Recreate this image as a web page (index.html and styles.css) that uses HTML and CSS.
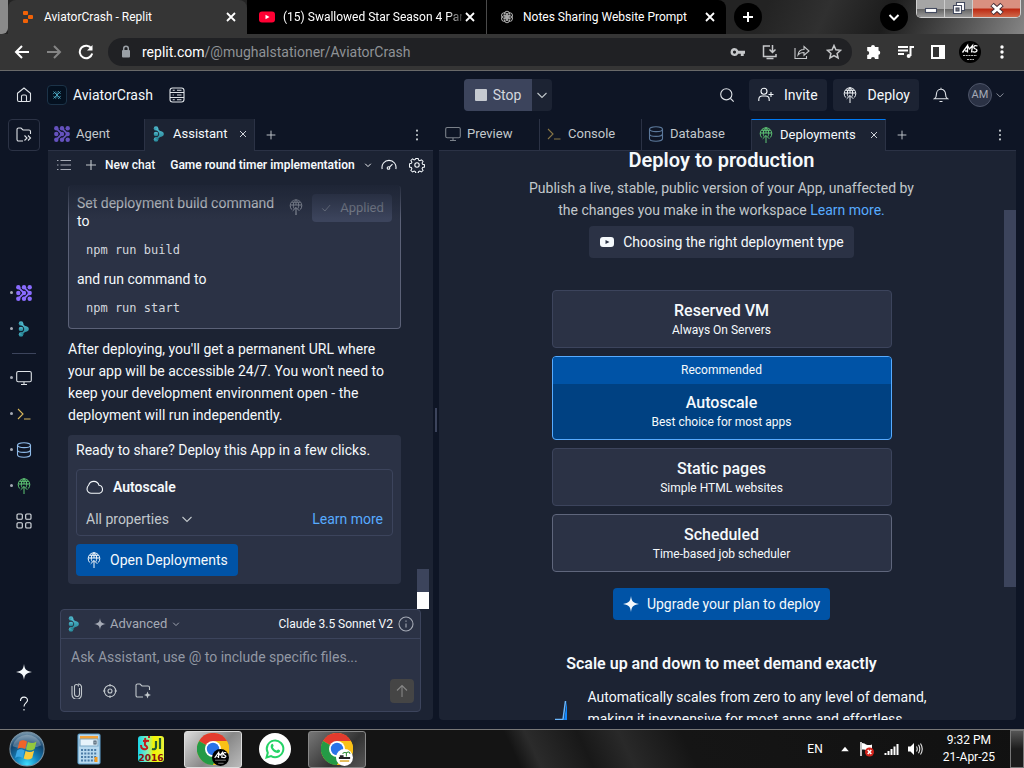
FILE: index.html
```html
<!DOCTYPE html>
<html lang="en">
<head>
<meta charset="utf-8">
<title>AviatorCrash - Replit</title>
<link rel="stylesheet" href="styles.css">
</head>
<body>
<svg class="sprite" aria-hidden="true">
  <defs>
    <linearGradient id="teal" x1="0" y1="0" x2="0" y2="1"><stop offset="0" stop-color="#56c0d6"/><stop offset="1" stop-color="#217f8f"/></linearGradient>
    <radialGradient id="orb" cx=".5" cy=".95" r=".95"><stop offset="0" stop-color="#3fe0ff"/><stop offset=".35" stop-color="#1583bd"/><stop offset=".7" stop-color="#12446e"/><stop offset="1" stop-color="#7e9cb0"/></radialGradient>
    <linearGradient id="rainbow" x1="0" y1="0" x2="1" y2="0"><stop offset="0" stop-color="#19d3e8"/><stop offset=".35" stop-color="#7df0c0"/><stop offset=".6" stop-color="#f4f400"/><stop offset="1" stop-color="#e8f63a"/></linearGradient>
  </defs>
  <symbol id="close" viewBox="0 0 16 16"><path d="M4 4l8 8M12 4l-8 8"/></symbol>
  <symbol id="plus" viewBox="0 0 16 16"><path d="M8 3v10M3 8h10"/></symbol>
  <symbol id="down" viewBox="0 0 16 16"><path d="M3.500 6L8 10.500 12.500 6"/></symbol>
  <symbol id="dots" viewBox="0 0 16 16"><g fill="currentColor" stroke="none"><circle cx="8" cy="3" r="1.200"/><circle cx="8" cy="8" r="1.200"/><circle cx="8" cy="13" r="1.200"/></g></symbol>
  <symbol id="monitor" viewBox="0 0 16 16"><rect x=".7" y="1.500" width="14.600" height="10.300" rx="1.500"/><path d="M8 12v2.500M5 14.500h6"/></symbol>
  <symbol id="console" viewBox="0 0 16 16"><path d="M2 3l5 5-5 5M8 13h6.500"/></symbol>
  <symbol id="database" viewBox="0 0 16 16"><ellipse cx="8" cy="3.200" rx="6.500" ry="2.400"/><path d="M1.500 3v9.800c0 1.300 2.900 2.500 6.500 2.500s6.500-1.200 6.500-2.500V3M1.500 8c0 1.300 2.900 2.400 6.500 2.400S14.500 9.300 14.500 8"/></symbol>
  <symbol id="deploy" viewBox="0 0 16 16"><path d="M3.700 10.500A5.800 5.800 0 1 1 12.300 10.500M8 .6C5 3 4.800 7 6 9.500M8 .6c3 2.400 3.200 6.400 2 8.900M2.300 6h11.400M3.500 3.300h9M8 .6v5.400M8 8.500V16M4.700 11.800L8 8.500l3.300 3.300" stroke-width="1"/></symbol>
  <symbol id="agent" viewBox="0 0 16 16"><g fill="currentColor" stroke="none"><circle cx="2.300" cy="2.300" r="2.200"/><circle cx="8" cy="2.300" r="2.200"/><circle cx="13.700" cy="2.300" r="2.200"/><circle cx="2.300" cy="8" r="2.200"/><circle cx="8" cy="8" r="2.200"/><circle cx="13.700" cy="8" r="2.200"/><circle cx="2.300" cy="13.700" r="2.200"/><circle cx="8" cy="13.700" r="2.200"/><circle cx="13.700" cy="13.700" r="2.200"/></g><path stroke-width="1.800" d="M2.300 2.300L8 8l-5.700 5.700M8 2.300L13.700 8 8 13.700"/></symbol>
  <symbol id="assistant" viewBox="0 0 16 16"><g fill="url(#teal)" stroke="none"><circle cx="5" cy="2.500" r="2.300"/><circle cx="5" cy="8" r="2.300"/><circle cx="5" cy="13.500" r="2.300"/><path d="M7 1.500c0 2.500 1.500 3.300 4 4a2.600 2.600 0 0 1 0 5c-2.500.7-4 1.500-4 4l-3-2.200c2-.6 3.800-1.800 4.300-4.300C7.800 5.500 6 4.300 4 3.700z"/></g></symbol>
  <symbol id="spark" viewBox="0 0 16 16"><path fill="currentColor" stroke="none" d="M8 0c.7 5.400 1.600 6.800 8 8-6.400 1.200-7.300 2.600-8 8-.7-5.400-1.600-6.800-8-8 6.400-1.200 7.300-2.600 8-8z"/></symbol>
  <symbol id="chrome" viewBox="0 0 32 32"><g stroke="none"><circle cx="16" cy="16" r="16" fill="#fbc116"/><path d="M16 16L2.100 8A16 16 0 0 1 29.900 8z" fill="#e33b2e"/><path d="M2.100 8A16 16 0 0 0 16 32l7-12-7-4z" fill="#249a46"/><path d="M16 8h13.900A16 16 0 0 1 16 32l7-12z" fill="#fbc116"/><circle cx="16" cy="16" r="8" fill="#fff"/><circle cx="16" cy="16" r="6.200" fill="#2a73e8"/></g></symbol>
</svg>

<header class="titlebar">
  <div class="edge"></div>
  <nav class="browser-tabs" aria-label="Browser tabs">
    <div class="browser-tab current">
      <svg class="favicon" viewBox="0 0 16 16"><g fill="#f26207" stroke="none"><rect x="3" y="2" width="5" height="4" rx="1"/><rect x="8" y="6" width="5" height="4" rx="1"/><rect x="3" y="10" width="5" height="4" rx="1"/></g></svg>
      <span class="tab-title">AviatorCrash - Replit</span>
      <button class="tab-close" aria-label="Close tab"><svg class="bold"><use href="#close"/></svg></button>
    </div>
    <div class="browser-tab">
      <svg class="favicon" viewBox="0 0 16 16"><rect x="0" y="2.500" width="16" height="11" rx="3" fill="#f03" stroke="none"/><path d="M6.500 5.700v4.600l4-2.300z" fill="#fff" stroke="none"/></svg>
      <span class="tab-title faded">(15) Swallowed Star Season 4 Par</span>
      <button class="tab-close" aria-label="Close tab"><svg class="bold"><use href="#close"/></svg></button>
    </div>
    <div class="browser-tab">
      <svg class="favicon grey" viewBox="0 0 16 16"><g><ellipse cx="8" cy="5.500" rx="2.800" ry="3.300"/><ellipse cx="8" cy="5.500" rx="2.800" ry="3.300" transform="rotate(60 8 8)"/><ellipse cx="8" cy="5.500" rx="2.800" ry="3.300" transform="rotate(120 8 8)"/><ellipse cx="8" cy="5.500" rx="2.800" ry="3.300" transform="rotate(180 8 8)"/><ellipse cx="8" cy="5.500" rx="2.800" ry="3.300" transform="rotate(240 8 8)"/><ellipse cx="8" cy="5.500" rx="2.800" ry="3.300" transform="rotate(300 8 8)"/></g></svg>
      <span class="tab-title">Notes Sharing Website Prompt</span>
      <button class="tab-close" aria-label="Close tab"><svg class="bold"><use href="#close"/></svg></button>
    </div>
  </nav>
  <button class="round" aria-label="New tab"><svg class="bold"><use href="#plus"/></svg></button>
  <button class="round search-tabs" aria-label="Search tabs"><svg class="bold"><use href="#down"/></svg></button>
  <div class="window-buttons">
    <button aria-label="Minimize"><svg viewBox="0 0 16 16"><rect x="2.500" y="7.500" width="11" height="4" fill="#fff" stroke="#444b60"/></svg></button>
    <button aria-label="Restore"><svg viewBox="0 0 16 16"><path d="M5.500 1.500h8v8h-8z" fill="#fff" stroke="#444b60"/><path d="M2.500 4.500h8v8h-8z" fill="#fff" stroke="#444b60"/><rect x="5" y="7" width="3" height="3" fill="#777" stroke="#444b60"/></svg></button>
    <button class="quit" aria-label="Close"><svg viewBox="0 0 16 16"><path d="M3 3.500l10 9M13 3.500l-10 9" stroke="#4a3038" stroke-width="5"/><path d="M3.500 4l9 8M12.500 4l-9 8" stroke="#fff" stroke-width="3"/></svg></button>
  </div>
</header>

<div class="toolbar">
  <button class="tool" aria-label="Back"><svg class="bold" viewBox="0 0 16 16"><path d="M15 8H2M8 2L2 8l6 6"/></svg></button>
  <button class="tool dim" aria-label="Forward"><svg class="bold" viewBox="0 0 16 16"><path d="M1 8h13M8 2l6 6-6 6"/></svg></button>
  <button class="tool" aria-label="Reload"><svg class="bold" viewBox="0 0 16 16"><path d="M13.500 4.700A6.300 6.300 0 1 0 14.200 9.500"/><path d="M14.500 1v5.500H9z" fill="currentColor" stroke="none"/></svg></button>
  <div class="omnibox">
    <svg class="lock" viewBox="0 0 16 16"><rect x="4" y="6" width="8" height="7.500" rx="1" fill="currentColor" stroke="none"/><path d="M5.700 6V4.500a2.300 2.300 0 0 1 4.600 0V6"/></svg>
    <div class="url" role="textbox" aria-label="Address"><b>replit.com</b>/@mughalstationer/AviatorCrash</div>
    <button class="tool" aria-label="Passwords"><svg viewBox="0 0 16 16"><path fill="currentColor" fill-rule="evenodd" stroke="none" d="M4.500 4a4 4 0 0 1 3.800 2.700H15v3h-1.300V12h-2.900V9.700H8.200A4 4 0 1 1 4.500 4zm0 2.500a1.600 1.600 0 1 0 0 3.200 1.600 1.600 0 0 0 0-3.200z"/></svg></button>
    <button class="tool" aria-label="Install"><svg viewBox="0 0 16 16"><path stroke-width="1.500" d="M8 2H1.500v10.500h12.500V10M10.500 1v7M7.500 5.500l3 3 3-3M4.500 14.500h7"/></svg></button>
    <button class="tool" aria-label="Share"><svg viewBox="0 0 16 16"><path d="M1 4v10.500h11.500V12M4 11c.5-4 3-5.500 6-5.500V2.500L15 7l-5 4.200V8.500C7.500 8.500 5.500 9 4 11z"/></svg></button>
    <button class="tool" aria-label="Bookmark"><svg viewBox="0 0 16 16"><path stroke-width="1.500" d="M8 1.500l1.900 4.300 4.700.5-3.500 3.100 1 4.600L8 11.600 3.900 14l1-4.600L1.400 6.300l4.700-.5z"/></svg></button>
  </div>
  <button class="tool" aria-label="Extensions"><svg viewBox="0 0 16 16"><path fill="currentColor" stroke="none" d="M5 3a2 2 0 0 1 4 0h3.500v3.500a2.200 2.200 0 0 1 0 4.300V15H9a2 2 0 0 0-4 0H1.200v-4a2 2 0 0 0 0-4V3z"/></svg></button>
  <button class="tool" aria-label="Media"><svg class="bold" viewBox="0 0 16 16"><path d="M0 3h10M0 6.500h10M0 10h6M12.500 12V3H16"/><circle cx="10.700" cy="12" r="2" fill="currentColor" stroke="none"/></svg></button>
  <button class="tool" aria-label="Side panel"><svg viewBox="0 0 16 16"><path fill="currentColor" fill-rule="evenodd" stroke="none" d="M1 1h14v14H1zM3 3v10h6V3z"/></svg></button>
  <button class="tool" aria-label="Profile"><span class="profile"><svg viewBox="0 0 22 22"><path d="M3.500 11.500l5-7v7M6 10h3M8.500 4.500l2 3.500 3-3.500-1 7M18.500 5c-4-1.500-5 2-2 3s1 4-3 2.700" stroke="#fff" stroke-width="1.300"/><path d="M4 14.500h14M8 18.500h7" stroke="#bbb" stroke-dasharray="2 .7"/></svg></span></button>
  <button class="tool" aria-label="Menu"><svg viewBox="0 0 16 16"><g fill="#fff" stroke="none"><circle cx="8" cy="3" r="1.700"/><circle cx="8" cy="8" r="1.700"/><circle cx="8" cy="13" r="1.700"/></g></svg></button>
</div>

<div class="app">
  <header class="app-header">
    <div class="group">
      <button class="icon-button" aria-label="Home"><svg viewBox="0 0 16 16"><path d="M1.500 6.300L8 1l6.500 5.300v6.700a1.500 1.500 0 0 1-1.500 1.500H3A1.500 1.500 0 0 1 1.500 13zM5.500 14.500V9.500A1.500 1.500 0 0 1 7 8h2a1.500 1.500 0 0 1 1.500 1.500v5"/></svg></button>
      <span class="app-logo"><svg viewBox="0 0 16 16"><path d="M4 4l8 8M12 4l-8 8M3.500 7l3-3M9 3.500l3 3M4 9.500L7 12M9.500 12.500L12 9M8 5v6"/></svg></span>
      <span class="app-name">AviatorCrash</span>
      <button class="icon-button server" aria-label="Server"><svg viewBox="0 0 16 16"><rect x="1" y="1" width="14" height="14" rx="2.500"/><path d="M1 5.500h14M1 10.500h14M3.700 3.300h2M8 3.300h4.500M3.700 8h1M8 8h4.500M3.700 12.800h2M8 12.800h4.500"/></svg></button>
    </div>
    <div class="run">
      <button class="stop"><span class="square"></span>Stop</button>
      <button class="run-more" aria-label="Run options"><svg><use href="#down"/></svg></button>
    </div>
    <div class="group end">
      <button class="icon-button" aria-label="Search"><svg viewBox="0 0 16 16"><circle cx="7.300" cy="7.300" r="5.600"/><path d="M11.500 11.500l3.200 3.200"/></svg></button>
      <button class="solid"><svg viewBox="0 0 16 16"><circle cx="6" cy="4.300" r="3"/><path d="M.8 14v-1.500a3.500 3.500 0 0 1 3.500-3.500h3.400a3.500 3.500 0 0 1 3.500 3.500V14M13 5v5M10.500 7.500h5"/></svg>Invite</button>
      <button class="solid"><svg><use href="#deploy"/></svg>Deploy</button>
      <button class="icon-button" aria-label="Notifications"><svg viewBox="0 0 16 16"><path d="M1.500 11.700c1.500-1 2-2.200 2-5a4.500 4.500 0 0 1 9 0c0 2.800.5 4 2 5zM6.500 14.500h3M8 2V.8"/></svg></button>
      <button class="account" aria-label="Account AM"><span>AM</span><svg><use href="#down"/></svg></button>
    </div>
  </header>

  <div class="workspace">
    <aside class="rail">
      <button class="files" aria-label="Files"><svg viewBox="0 0 16 16"><path d="M7 14H2.500A1.500 1.500 0 0 1 1 12.500v-10A1.500 1.500 0 0 1 2.500 1H5l2 2h6a1.500 1.500 0 0 1 1.500 1.500V7M8.500 8.500L11 11l-2.500 2.500M12 8.500l2.500 2.500-2.500 2.500"/></svg></button>
      <div class="rail-icons">
        <button class="open violet" aria-label="Agent"><svg><use href="#agent"/></svg></button>
        <button class="open" aria-label="Assistant"><svg><use href="#assistant"/></svg></button>
        <hr>
        <button class="open" aria-label="Preview"><svg><use href="#monitor"/></svg></button>
        <button class="open yellow" aria-label="Console"><svg><use href="#console"/></svg></button>
        <button class="open sky" aria-label="Database"><svg><use href="#database"/></svg></button>
        <button class="open green" aria-label="Deployments"><svg><use href="#deploy"/></svg></button>
        <button class="all" aria-label="All tools"><svg viewBox="0 0 16 16"><rect x="1" y="1" width="5.300" height="5.300" rx="1"/><rect x="9.700" y="1" width="5.300" height="5.300" rx="1"/><rect x="1" y="9.700" width="5.300" height="5.300" rx="1"/><rect x="9.700" y="9.700" width="5.300" height="5.300" rx="1"/></svg></button>
      </div>
      <div class="rail-foot">
        <button aria-label="What's new"><svg><use href="#spark"/></svg></button>
        <button aria-label="Help"><svg viewBox="0 0 16 16"><path d="M4.500 5c0-5 7-5 7-.7C11.500 7 8 7 8 10.500M8 13v1.500"/></svg></button>
      </div>
    </aside>

    <section class="pane left" aria-label="Assistant">
      <div class="tabs">
        <button class="tab agent"><svg class="violet dimmed"><use href="#agent"/></svg>Agent</button>
        <button class="tab active"><svg><use href="#assistant"/></svg>Assistant<svg class="x"><use href="#close"/></svg></button>
        <button class="add" aria-label="Add tab"><svg><use href="#plus"/></svg></button>
        <button class="add more" aria-label="Pane options"><svg><use href="#dots"/></svg></button>
      </div>
      <div class="pane-body">
        <div class="chat-bar">
          <button class="muted" aria-label="Chats"><svg viewBox="0 0 16 16"><path d="M4.500 3.500H15M4.500 8H15M4.500 12.500H15M1 3.500h1.500M1 8h1.500M1 12.500h1.500"/></svg></button>
          <button class="new-chat"><svg><use href="#plus"/></svg>New chat</button>
          <button class="chat-name">Game round timer implementation<svg class="small"><use href="#down"/></svg></button>
          <button aria-label="Usage"><svg viewBox="0 0 16 16"><path d="M1.200 12a7 7 0 1 1 13.600 0M8.500 10.200l3-3"/><circle cx="7.500" cy="11" r="1.300"/></svg></button>
          <button aria-label="Settings"><svg viewBox="0 0 16 16"><circle cx="8" cy="8" r="2.200"/><path d="M6.700.8h2.600l.5 2 1.300.6 1.800-1.100 1.800 1.800-1.100 1.800.6 1.300 2 .5v2.600l-2 .5-.6 1.300 1.100 1.800-1.800 1.800-1.800-1.100-1.300.6-.5 2H6.700l-.5-2-1.300-.6-1.800 1.100-1.800-1.800 1.100-1.800-.6-1.300-2-.5V6.700l2-.5.6-1.300-1.100-1.800 1.800-1.800 1.800 1.100 1.300-.6z" transform="translate(.7 .7) scale(.91)"/></svg></button>
        </div>
        <div class="chat">
          <div class="messages">
            <div class="command-card">
              <div class="command">
                <p>Set deployment build command to</p>
                <pre>npm run build</pre>
                <p>and run command to</p>
                <pre>npm run start</pre>
              </div>
              <svg class="muted"><use href="#deploy"/></svg>
              <button class="applied" disabled><svg viewBox="0 0 16 16"><path d="M3 8.500l3.500 3.500L13.500 4"/></svg>Applied</button>
            </div>
            <p class="message">After deploying, you'll get a permanent URL where<br>your app will be accessible 24/7. You won't need to<br>keep your development environment open - the<br>deployment will run independently.</p>
            <div class="share-card">
              <p>Ready to share? Deploy this App in a few clicks.</p>
              <div class="plan">
                <h3><svg viewBox="0 0 18 16"><path d="M5.500 14.300A4.300 4.300 0 0 1 1 10.200C1 8 1.900 6.900 2.700 6A5.400 5.400 0 0 1 13 6.300a4.100 4.100 0 0 1 .5 8z"/></svg>Autoscale</h3>
                <div class="plan-row"><button>All properties<svg><use href="#down"/></svg></button><a href="#learn">Learn more</a></div>
              </div>
              <button class="primary"><svg><use href="#deploy"/></svg>Open Deployments</button>
            </div>
          </div>
          <div class="scrollbar"><span></span></div>
        </div>
        <form class="composer">
          <div class="composer-head">
            <svg><use href="#assistant"/></svg>
            <button type="button" class="mode"><svg class="mid"><use href="#spark"/></svg>Advanced<svg class="small"><use href="#down"/></svg></button>
            <span class="model">Claude 3.5 Sonnet V2</span>
            <svg viewBox="0 0 16 16" class="muted"><circle cx="8" cy="8" r="7"/><path d="M8 7.500v4M8 4.500v1.200"/></svg>
          </div>
          <textarea rows="1" aria-label="Message" placeholder="Ask Assistant, use @ to include specific files..."></textarea>
          <div class="composer-foot">
            <button type="button" aria-label="Attach"><svg viewBox="0 0 16 16"><path d="M10.500 5v6a2.500 2.500 0 0 1-5 0V3.500a2 2 0 0 1 4 0M3 3v8.500a4.500 4.500 0 0 0 9.500 0V3.500A3.500 3.500 0 0 0 9 1" /></svg></button>
            <button type="button" aria-label="Context"><svg viewBox="0 0 16 16"><circle cx="8" cy="8" r="5.700"/><circle cx="8" cy="8" r="2"/><path d="M8 1v2.500M8 12.500V15M1 8h2.500M12.500 8H15"/></svg></button>
            <button type="button" aria-label="Add files"><svg viewBox="0 0 16 16"><path d="M8 14H2.500A1.500 1.500 0 0 1 1 12.500v-10A1.500 1.500 0 0 1 2.500 1H5l2 2h6a1.500 1.500 0 0 1 1.500 1.500V7"/><path d="M12.500 8.500l1 2.500 2.500 1-2.500 1-1 2.500-1-2.500-2.500-1 2.500-1z" fill="currentColor" stroke="none"/></svg></button>
            <button type="submit" class="send" aria-label="Send"><svg viewBox="0 0 16 16"><path d="M8 14V3M3 7.500l5-5 5 5"/></svg></button>
          </div>
        </form>
      </div>
    </section>

    <div class="splitter"><span></span></div>

    <section class="pane right" aria-label="Deployments">
      <div class="tabs">
        <button class="tab preview"><svg class="faint"><use href="#monitor"/></svg>Preview</button>
        <button class="tab consoles"><svg class="yellow faint"><use href="#console"/></svg>Console</button>
        <button class="tab databases"><svg class="sky faint"><use href="#database"/></svg>Database</button>
        <button class="tab active focused"><svg class="green"><use href="#deploy"/></svg>Deployments<svg class="x"><use href="#close"/></svg></button>
        <button class="add" aria-label="Add tab"><svg><use href="#plus"/></svg></button>
        <button class="add more" aria-label="Pane options"><svg><use href="#dots"/></svg></button>
      </div>
      <div class="pane-body deploy">
        <div class="deploy-scroll">
          <h1>Deploy to production</h1>
          <p class="intro">Publish a live, stable, public version of your App, unaffected by<br>the changes you make in the workspace <a href="#docs">Learn more.</a></p>
          <button class="guide"><svg viewBox="0 0 16 16"><path fill="currentColor" fill-rule="evenodd" stroke="none" d="M4 3h8a3 3 0 0 1 3 3v4a3 3 0 0 1-3 3H4a3 3 0 0 1-3-3V6a3 3 0 0 1 3-3zm2.500 3v4l4-2z"/></svg>Choosing the right deployment type</button>
          <div class="options">
            <button class="option"><strong>Reserved VM</strong><small>Always On Servers</small></button>
            <button class="option chosen"><em>Recommended</em><strong>Autoscale</strong><small>Best choice for most apps</small></button>
            <button class="option"><strong>Static pages</strong><small>Simple HTML websites</small></button>
            <button class="option hovered"><strong>Scheduled</strong><small>Time-based job scheduler</small></button>
          </div>
          <button class="primary upgrade"><svg><use href="#spark"/></svg>Upgrade your plan to deploy</button>
          <h2>Scale up and down to meet demand exactly</h2>
          <div class="feature">
            <svg viewBox="0 0 32 32"><path d="M1 20h8L12 1v31H1z" fill="#0f87ff" stroke="none"/><path d="M0 19.500h8L10.500 1" stroke="#6bb8ff" stroke-width="1.500"/></svg>
            <p>Automatically scales from zero to any level of demand,<br>making it inexpensive for most apps and effortless</p>
          </div>
        </div>
        <div class="scrollbar"><span></span></div>
      </div>
    </section>
  </div>
</div>

<footer class="taskbar">
  <button class="start" aria-label="Start"><svg viewBox="0 0 40 40"><circle cx="20" cy="20" r="18" fill="url(#orb)" stroke="#7893a6"/><path d="M5 17a15.500 15.500 0 0 1 30-1c-9 4-20 5-30 1z" fill="#fff" opacity=".25" stroke="none"/><g stroke="none"><path d="M12 12c3-2 5-1.500 8 0l-2 8c-3-1.500-5-2-8 0z" fill="#f0642a"/><path d="M21 12.500c3 1.500 6 1.500 9-.5l-2 8c-3 2-6 2-9 .5z" fill="#93c83e"/><path d="M9.500 21.500c3-2 5-1.500 8 0l-2 8c-3-1.500-5-2-8 0z" fill="#3ba7e5"/><path d="M18.500 22c3 1.500 6 1.500 9-.5l-2 8c-3 2-6 2-9 .5z" fill="#fbcb3c"/></g></svg></button>
  <button class="task" aria-label="Calculator"><svg viewBox="0 0 32 32"><rect x="5" y="1" width="22" height="30" rx="1.500" fill="#b7d9ef" stroke="#5b9cc8"/><path d="M7 3h18v3H7z" fill="#f2a33a" stroke="none"/><path d="M7 6h18v7H7z" fill="#e6f3fb" stroke="#7ba9c8"/><path d="M21 8h2v3h-2z" stroke="#44586a"/><path d="M8 17h16M8 20.500h16M8 24h16M8 27.500h16" stroke="#4a7ba6" stroke-width="2.200" stroke-dasharray="2 1.300"/><path d="M23 24v5" stroke="#f39a20" stroke-width="3"/></svg></button>
  <button class="task" aria-label="InPage 2016"><svg viewBox="0 0 32 32"><rect x="3" y="3" width="26" height="26" rx="3" fill="url(#rainbow)" stroke="none"/><path d="M25 5v11M21 8v6q0 3-4 2" stroke="#225b30" stroke-width="2.200"/><path d="M14 8q-5-1-4 4 4 3 1 4-5 1-5-4M8 8q3 0 2-3M13 4h2" stroke="#c41c1c" stroke-width="2"/><text x="16" y="28" text-anchor="middle" class="year">2016</text></svg></button>
  <button class="task running lit" aria-label="Chrome"><svg><use href="#chrome"/></svg><span class="profile badge"><svg viewBox="0 0 22 22"><path d="M3.500 11.500l5-7v7M6 10h3M8.500 4.500l2 3.500 3-3.500-1 7M18.500 5c-4-1.500-5 2-2 3s1 4-3 2.700" stroke="#fff" stroke-width="1.500"/><path d="M4 14.500h14M8 18.500h7" stroke="#888"/></svg></span></button>
  <button class="task" aria-label="WhatsApp"><svg viewBox="0 0 32 32"><circle cx="16" cy="16" r="16" fill="#fff" stroke="none"/><path d="M7.500 24.500l1.300-4.700a8.300 8.300 0 1 1 3.300 3.300z" stroke="#25d366" stroke-width="2"/><path d="M12.200 11.500c1-1.300 1.800-.9 2.300.8.4 1.200-.6 1.200-.6 1.900 1 2 2.300 2.700 3.600 3.300.9-.2.900-1.400 1.900-1 1.700.7 2.100 1 1.400 2.300-1.300 2-4.300 1.100-6.400-.6-2.500-2.300-3.500-4.700-2.200-6.700z" fill="#25d366" stroke="none"/></svg></button>
  <button class="task running" aria-label="Chrome second profile"><svg><use href="#chrome"/></svg><span class="profile badge farm"><svg viewBox="0 0 16 16"><path d="M10 3q-3-1-4 1M10 3q3-2 4 1M10 3v4" stroke="#2c8a2f"/><path d="M3 6.500h4M2 8.500h12" stroke="#222" stroke-width="2"/><path d="M3 11h10v1.500H3z" fill="#d8a21c" stroke="none"/></svg></span></button>
  <div class="tray">
    <span class="lang">EN</span>
    <svg class="tiny" viewBox="0 0 16 16"><path d="M8 5l5 6H3z" fill="#fff" stroke="none"/></svg>
    <svg viewBox="0 0 16 16"><path d="M2 1v14" stroke="#fff" stroke-width="1.500"/><path d="M3 2q3 0 4 1.500 3 1 6 0v6q-3 1-5 0-2-1.500-5-1z" fill="#fff" stroke="none"/><circle cx="10.500" cy="11" r="4.500" fill="#d3231b" stroke="none"/><path d="M8.700 9l3.600 4M12.300 9l-3.600 4" stroke="#fff" stroke-width="1.500"/></svg>
    <svg viewBox="0 0 16 16"><path d="M2.500 14v-2M5.500 14v-4M8.500 14V8M11.500 14V5.500M14.500 14V3" stroke="#fff" stroke-width="2"/></svg>
    <svg viewBox="0 0 16 16"><path d="M1 5.500h2.500L7 2v12l-3.500-3.500H1z" fill="#fff" stroke="none"/><path d="M9.500 5.500q1.500 2.500 0 5M11.500 3.800q2.500 4.200 0 8.400M13.500 2.500q3.500 5.500 0 11" stroke="#e8e8e8"/></svg>
    <time>9:32 PM<br>21-Apr-25</time>
  </div>
  <button class="peek" aria-label="Show desktop"></button>
</footer>
</body>
</html>
```

FILE: styles.css
```css
* { box-sizing: border-box; }

body {
  margin: 0;
  height: 100vh;
  display: flex;
  flex-direction: column;
  overflow: hidden;
  background: #0e1525;
  color: #f5f9fc;
  font-family: Roboto, "Liberation Sans", sans-serif;
  font-size: 14px;
  line-height: 22px;
}

button {
  display: flex;
  align-items: center;
  justify-content: center;
  margin: 0;
  padding: 0;
  border: 0;
  background: none;
  color: inherit;
  font: inherit;
  white-space: nowrap;
}

p, h1, h2, h3, pre { margin: 0; }
a { color: #57abff; text-decoration: none; }

svg {
  width: 16px;
  height: 16px;
  flex: none;
  fill: none;
  stroke: currentColor;
  stroke-width: 1.1;
}
svg.bold { stroke-width: 2; }
svg.small { width: 10px; height: 10px; stroke-width: 1.5; }
svg.mid { width: 12px; height: 12px; stroke-width: 1.4; }
.sprite { position: absolute; width: 0; height: 0; }

.violet { color: #8a6cff; }
.yellow { color: #d9b75c; }
.sky { color: #8fbbea; }
.green { color: #5fc776; }
.muted { color: #a5aab5; }
.faint { opacity: 0.6; }
.dimmed { opacity: 0.7; }

/* Browser frame */
.titlebar {
  display: flex;
  align-items: center;
  height: 34px;
  flex: none;
  background: linear-gradient(115deg, #232323 0 74%, #303030 80%, #1c1c1c 86%, #555 94%, #858585);
  font-size: 12px;
  color: #fff;
}
.edge { width: 8px; height: 34px; background: #8a8a8a; border-radius: 0 0 6px 0; }
.browser-tabs { display: flex; flex: 0 1 718px; min-width: 0; height: 34px; }
.browser-tab {
  display: flex;
  align-items: center;
  flex: 1 1 0;
  min-width: 0;
  gap: 8px;
  padding: 0 8px 0 12px;
  background: #000;
}
.browser-tab + .browser-tab + .browser-tab { border-left: 1px solid #4a4a4a; border-radius: 0 8px 0 0; }
.browser-tab.current { background: #353535; border-radius: 8px 8px 0 0; }
.tab-title { flex: 1; overflow: hidden; white-space: nowrap; }
.tab-title.faded { -webkit-mask-image: linear-gradient(90deg, #000 92%, rgba(0, 0, 0, 0.2)); mask-image: linear-gradient(90deg, #000 92%, rgba(0, 0, 0, 0.2)); }
.tab-close { margin-left: -8px; }
.tab-close svg.bold { stroke-width: 1.8; }
.grey { color: #aaa; stroke-width: 1; }
.round { width: 28px; height: 28px; margin-left: 8px; border-radius: 50%; background: #000; }
.search-tabs { margin-left: auto; margin-right: 8px; }
.window-buttons {
  display: flex;
  align-self: flex-start;
  height: 18px;
  margin-right: 3px;
  border: 1px solid #d0d0d0;
  border-top: 0;
  border-radius: 0 0 5px 5px;
  overflow: hidden;
}
.window-buttons button { width: 28px; background: linear-gradient(#a5a5a5 50%, #666 55%, #999); border-right: 1px solid #ccc; }
.window-buttons .quit { width: 47px; border: 0; background: linear-gradient(#d99080 45%, #bd2b14 55%, #d0694b); }

.toolbar {
  display: flex;
  align-items: center;
  height: 37px;
  flex: none;
  padding: 0 6px;
  background: #353535;
  border-bottom: 1px solid #696969;
  color: #fff;
}
.toolbar .tool { width: 32px; height: 28px; flex: none; }
.toolbar .dim { color: #858585; }
.omnibox {
  display: flex;
  align-items: center;
  flex: 1;
  min-width: 0;
  height: 28px;
  margin: 0 6px;
  padding: 0 2px 0 10px;
  border-radius: 14px;
  background: #202124;
  color: #c6c8ca;
}
.omnibox .lock { color: #9aa0a6; stroke-width: 1.5; }
.url {
  flex: 1;
  overflow: hidden;
  padding-left: 8px;
  white-space: nowrap;
  color: #8f9296;
}
.url b { color: #fff; font-weight: 400; }
.profile {
  display: grid;
  place-items: center;
  width: 22px;
  height: 22px;
  border-radius: 50%;
  background: #000;
}
.profile svg { width: 22px; height: 22px; }

/* Workspace header */
.app { display: flex; flex-direction: column; flex: 1; min-height: 0; }
.app-header {
  display: grid;
  grid-template-columns: minmax(0, 1fr) auto minmax(0, 1fr);
  align-items: center;
  height: 48px;
  flex: none;
  padding: 0 16px 0 8px;
}
.group { display: flex; align-items: center; gap: 6px; }
.group.end { justify-content: flex-end; }
.icon-button { width: 32px; height: 32px; }
.app-logo {
  display: grid;
  place-items: center;
  width: 20px;
  height: 20px;
  margin-left: 1px;
  border: 1px solid #1c3348;
  border-radius: 4px;
  background: #04101f;
  color: #4aa3bd;
}
.app-logo svg { width: 14px; height: 14px; }
.server { margin-left: 2px; }
.run { display: flex; border-radius: 4px; overflow: hidden; background: #1c2333; }
.stop { width: 68px; height: 32px; gap: 6px; background: #3c445c; color: #d3d7de; }
.square { width: 12px; height: 12px; border-radius: 1px; background: #c5c9d0; }
.run-more { width: 20px; color: #c2c8cc; }
.solid { height: 32px; gap: 10px; padding: 0 9px; border-radius: 4px; background: #1c2333; }
.account { margin-left: 5px; color: #a5aab5; font-size: 11px; }
.account span {
  width: 24px;
  height: 24px;
  border: 1px solid #4e5569;
  border-radius: 50%;
  background: #2b3245;
}
.account svg { width: 16px; height: 12px; }

/* Tool rail */
.workspace { display: flex; flex: 1; min-height: 0; padding: 0 8px 9px 0; }
.rail { display: flex; flex-direction: column; align-items: center; width: 48px; flex: none; }
.files { width: 32px; height: 32px; border: 1px solid #2b3245; border-radius: 4px; }
.files, .rail-icons, .icon-button { color: #dfe3e8; }
.rail-icons { display: flex; flex-direction: column; align-items: center; margin: auto 0; padding-top: 6px; }
.rail button { position: relative; }
.rail-icons button { width: 32px; height: 36px; }
.rail-icons .all { height: 34px; }
.rail-icons .open::before {
  content: "";
  position: absolute;
  left: 2px;
  top: 16px;
  width: 3px;
  height: 3px;
  border-radius: 50%;
  background: #a5aab5;
}
.rail-icons hr { width: 24px; margin: 6px 0; border: 0; border-top: 1px solid #3c445c; }
.rail-foot button { width: 32px; height: 32px; }

/* Panes */
.pane { display: flex; flex-direction: column; min-width: 0; }
.pane.left { flex: 385 1 0; }
.pane.right { flex: 577 1 0; }
.splitter { display: grid; place-items: center; width: 6px; flex: none; }
.splitter span { width: 2px; height: 24px; background: #3c445c; }
.tabs { display: flex; height: 32px; flex: none; border-bottom: 1px solid #2b3245; font-size: 13px; }
.tab {
  justify-content: flex-start;
  gap: 6px;
  padding: 0 6px 2px;
  color: #c2c8cc;
  border-left: 1px solid transparent;
}
.tab.agent { width: 96px; padding-left: 5px; }
.tab.preview { width: 100px; padding-left: 5px; }
.tab.consoles { width: 102px; border-color: #2b3245; }
.tab.databases { width: 110px; border-color: #2b3245; }
.tab.active {
  height: 32px;
  flex: none;
  padding-right: 5px;
  border-left: 1px solid #2b3245;
  border-right: 1px solid #2b3245;
  background: #1c2333;
  color: #f5f9fc;
}
.tab.focused { border-top: 1px solid #0079f2; }
.tab .x { width: 12px; height: 12px; margin-left: 3px; }
.tab.focused .x { margin-left: 6px; }
.add { width: 32px; color: #c2c8cc; }
.add svg { width: 14px; height: 14px; }
.more { margin-left: auto; }
.pane-body {
  display: flex;
  flex-direction: column;
  flex: 1;
  min-height: 0;
  background: #1c2333;
  border-radius: 0 0 4px 4px;
}

.chat-bar {
  display: flex;
  align-items: center;
  height: 28px;
  flex: none;
  padding: 0 8px;
  font-size: 12px;
  font-weight: 600;
}
.chat-bar button { gap: 8px; }
.chat-bar .new-chat { gap: 6px; margin-left: 11px; font-weight: 500; }
.new-chat svg { color: #c2c8cc; }
.chat-name { margin: 0 8px 0 15px; }
.chat-bar button:last-child { margin-left: auto; }
.chat { display: flex; flex: 1; min-height: 0; padding-right: 4px; position: relative; }
.chat::before {
  content: "";
  position: absolute;
  inset: 0 0 auto;
  height: 40px;
  background: linear-gradient(#1c2333, rgba(28, 35, 51, 0));
}
.messages { flex: 1; min-width: 0; padding: 6px 16px 0 20px; }
.command-card {
  display: flex;
  align-items: flex-start;
  gap: 8px;
  padding: 8px;
  border: 1px solid #5b6177;
  border-top-color: #2b3245;
  border-radius: 4px;
  background: #2b3245;
}
.command { flex: 1; min-width: 0; line-height: 18px; }
.command-card > .muted { margin-top: 5px; }
pre {
  padding: 10px 9px;
  color: #d3d7de;
  font: 12px/20px "DejaVu Sans Mono", monospace;
}
.command pre:last-child { padding-bottom: 2px; }
.applied { width: 80px; height: 28px; gap: 8px; border-radius: 4px; background: #3c445c; color: #838996; font-size: 13px; }
.applied svg { width: 12px; height: 12px; }
.message { margin: 9px 0; white-space: nowrap; }
.share-card { padding: 5px 8px 8px; border-radius: 4px; background: #2b3245; }
.share-card p { line-height: 20px; white-space: nowrap; }
.plan { margin: 9px 0 8px; padding: 6px 9px 5px; border: 1px solid #3c445c; border-radius: 4px; }
.plan h3 { display: flex; align-items: center; gap: 9px; font-size: 14px; font-weight: 600; }
.plan h3 svg { width: 18px; }
.plan-row { display: flex; justify-content: space-between; margin-top: 10px; }
.plan-row button { gap: 10px; color: #c2c8cc; }
.primary { height: 32px; gap: 8px; padding: 0 10px; border-radius: 4px; background: #0053a6; }
.scrollbar { display: flex; flex-direction: column; width: 12px; flex: none; }
.scrollbar span { background: #3c445c; }
.chat .scrollbar { justify-content: flex-end; }
.chat .scrollbar span { height: 40px; border-bottom: 17px solid #fff; }

.composer {
  flex: none;
  margin: 0 12px 8px;
  border: 1px solid #3c445c;
  border-radius: 4px;
  background: #2b3245;
}
.composer-head {
  display: flex;
  align-items: center;
  height: 29px;
  padding: 0 6px 0 5px;
  border-bottom: 1px solid #3c445c;
  font-size: 12px;
}
.mode { gap: 4px; margin-left: 12px; color: #a5aab5; font-size: 12px; }
.mode { font-size: 13px; }
.model { margin: 0 5px 0 auto; }
textarea {
  display: block;
  width: 100%;
  height: 36px;
  padding: 7px 10px;
  border: 0;
  outline: 0;
  resize: none;
  overflow: hidden;
  background: none;
  color: inherit;
  font: inherit;
}
textarea::placeholder { color: #9298a4; opacity: 1; }
.composer-foot { display: flex; align-items: center; gap: 17px; height: 36px; padding: 0 6px 4px 8px; color: #c2c8cc; }
.send { width: 24px; height: 24px; margin-left: auto; border-radius: 4px; background: #454545; color: #858585; }

/* Deployment page */
.deploy { flex-direction: row; overflow: hidden; }
.deploy-scroll { display: flex; flex-direction: column; align-items: center; flex: 1; min-width: 0; }
.deploy-scroll > * { flex: none; }
h1 { font-size: 20px; line-height: 18px; font-weight: 600; }
.intro { margin-top: 8px; color: #c2c8cc; text-align: center; white-space: nowrap; }
.guide { height: 32px; margin: 5px 0 32px; gap: 8px; padding: 0 10px; border-radius: 4px; background: #2b3245; }
.options { display: flex; flex-direction: column; gap: 8px; width: 100%; max-width: 340px; }
.option {
  flex-direction: column;
  padding: 9px 0 8px;
  border: 1px solid #3c445c;
  border-radius: 4px;
  background: #2b3245;
  overflow: hidden;
}
.option strong { font-size: 16px; font-weight: 500; line-height: 22px; }
.option small { font-size: 12px; line-height: 17px; }
.option em {
  align-self: stretch;
  margin-bottom: 8px;
  background: #0053a6;
  font-size: 12px;
  font-style: normal;
  line-height: 27px;
}
.option.chosen { padding-top: 0; border-color: #57abff; background: #004182; }
.option.hovered { border-color: #5f667c; }
.upgrade { margin: 16px 0 33px; }
h2 { font-size: 16px; font-weight: 600; line-height: 22px; }
.feature { display: grid; grid-template-columns: 32px auto; margin: 11px 0 0 39px; white-space: nowrap; }
.feature svg { width: 32px; height: 32px; margin-top: 14px; }
.deploy .scrollbar { padding-top: 59px; }
.deploy .scrollbar span { height: 74%; }

/* Desktop taskbar */
.taskbar {
  display: flex;
  align-items: center;
  height: 39px;
  flex: none;
  border-top: 1px solid #777;
  background: linear-gradient(65deg, #141414 0 50%, #2b2b2b 52%, #181818 57%, #292929 61%, #151515 67%, #111);
  font-size: 12px;
  line-height: 17px;
  color: #fff;
}
.start { width: 54px; }
.start svg { width: 38px; height: 38px; }
.task { position: relative; width: 58px; height: 37px; margin-left: 4px; }
.start + .task { margin-left: 6px; }
.task > svg { width: 32px; height: 32px; }
.task.running { border: 1px solid #888; border-radius: 3px; background: linear-gradient(135deg, #777, #333 60%, #555); }
.task.lit { border-color: #ddd; background: linear-gradient(135deg, #ddd, #888 55%, #bbb); }
.badge { position: absolute; right: 12px; bottom: 1px; width: 17px; height: 17px; }
.badge svg { width: 17px; height: 17px; }
.badge.farm { background: #fff; }
.badge.farm svg { width: 15px; height: 15px; }
.year { font: bold 9px "DejaVu Sans", sans-serif; fill: #8c1010; stroke: none; }
.tray { display: flex; align-items: center; gap: 8px; margin-left: auto; padding-right: 15px; }
.lang { margin-right: 8px; }
.tiny { width: 12px; height: 12px; }
time { margin-left: 12px; text-align: center; }
.peek { width: 14px; height: 38px; border: 1px solid #777; background: linear-gradient(#555, #1c1c1c 50%); }
```
